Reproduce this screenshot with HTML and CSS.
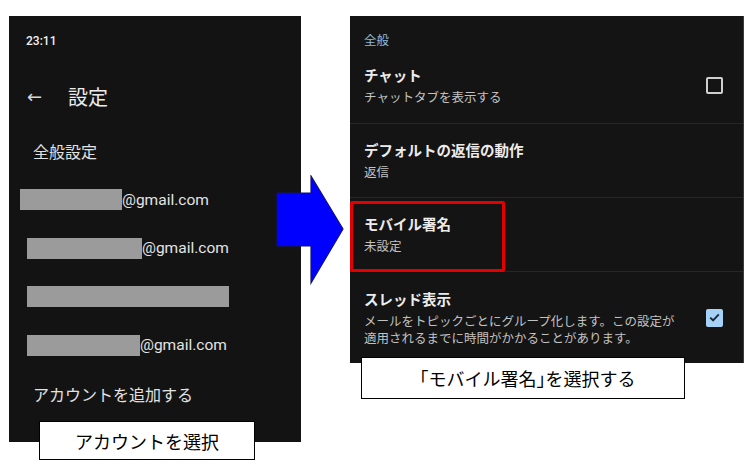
FILE: index.html
```html
<!DOCTYPE html>
<html lang="ja">
<head>
    <meta charset="UTF-8">
    <title>モバイル署名の設定</title>
    <link rel="stylesheet" href="styles.css">
</head>
<body>
    <div class="page">
        <div class="shot">
            <div class="phone">
                <div class="status">23:11</div>
                <div class="appbar">
                    <span class="back">&#8592;</span>
                    <span class="appbar-title">設定</span>
                </div>
                <div class="menu">
                    <div class="menu-item">全般設定</div>
                    <div class="menu-item account first">
                        <span class="mask" style="width:102px"></span>@gmail.com
                    </div>
                    <div class="menu-item account">
                        <span class="mask" style="width:115px"></span>@gmail.com
                    </div>
                    <div class="menu-item account">
                        <span class="mask" style="width:202px"></span>
                    </div>
                    <div class="menu-item account">
                        <span class="mask" style="width:113px"></span>@gmail.com
                    </div>
                    <div class="menu-item">アカウントを追加する</div>
                </div>
            </div>
            <div class="caption caption-left">アカウントを選択</div>
        </div>

        <svg class="arrow" width="70" height="112" viewBox="0 0 70 112">
            <polygon points="1,18 35,18 35,1 67,54 35,108 35,71 1,71" fill="#0000ff" stroke="#12127a" stroke-width="1.2"/>
        </svg>

        <div class="shot">
            <div class="settings">
                <div class="section-label">全般</div>
                <div class="row row-chat">
                    <div class="row-text">
                        <div class="row-title">チャット</div>
                        <div class="row-sub">チャットタブを表示する</div>
                    </div>
                    <span class="check"></span>
                </div>
                <div class="row row-reply">
                    <div class="row-text">
                        <div class="row-title">デフォルトの返信の動作</div>
                        <div class="row-sub">返信</div>
                    </div>
                </div>
                <div class="row row-sign">
                    <div class="row-text">
                        <div class="row-title">モバイル署名</div>
                        <div class="row-sub">未設定</div>
                    </div>
                    <div class="highlight"></div>
                </div>
                <div class="row row-thread">
                    <div class="row-text">
                        <div class="row-title">スレッド表示</div>
                        <div class="row-sub">メールをトピックごとにグループ化します。この設定が<br>適用されるまでに時間がかかることがあります。</div>
                    </div>
                    <span class="check checked">
                        <svg width="11" height="9" viewBox="0 0 11 9"><path d="M1.2 4.6 L4.1 7.3 L9.8 1.4" fill="none" stroke="#1b2a3a" stroke-width="1.9"/></svg>
                    </span>
                </div>
            </div>
            <div class="caption caption-right">「モバイル署名<span class="tight">」</span>を選択する</div>
        </div>
    </div>
</body>
</html>
```

FILE: styles.css
```css
* {
    margin: 0;
    padding: 0;
    box-sizing: border-box;
}
html, body {
    min-height: 473px;
}
body {
    background-color: #fff;
    font-family: "Noto Sans CJK JP", "Noto Sans", sans-serif;
}
.page {
    position: relative;
    display: flex;
    align-items: flex-start;
    gap: 49px;
    padding: 16px 0 0 9px;
    min-height: 473px;
}
.shot {
    position: relative;
}

/* left screenshot */
.phone {
    width: 292px;
    height: 426px;
    background-color: #131313;
    color: #e6e6e6;
}
.status {
    height: 56px;
    padding: 16px 0 0 17px;
    font-family: Roboto, sans-serif;
    font-size: 12px;
    font-weight: 500;
    line-height: 18px;
    color: #f0f0f0;
}
.appbar {
    display: flex;
    align-items: center;
    height: 48px;
    padding-left: 18px;
}
.back {
    width: 41px;
    font-family: "DejaVu Sans", sans-serif;
    font-size: 18px;
    color: #d8d8d8;
}
.appbar-title {
    font-size: 20px;
    color: #ececec;
}
.menu {
    padding-top: 7px;
}
.menu-item {
    display: flex;
    align-items: center;
    height: 48.5px;
    padding-left: 24px;
    font-size: 16px;
    color: #e2e2e2;
}
.account {
    padding-left: 18px;
    font-family: Roboto, sans-serif;
    font-size: 15.5px;
    color: #e4e4e4;
}
.account.first {
    padding-left: 11px;
}
.mask {
    display: inline-block;
    height: 21px;
    background-color: #9b9b9b;
}

/* right screenshot */
.settings {
    width: 394px;
    height: 347px;
    background-color: #141414;
    border-right: 1px solid #3c3c3c;
    color: #e8e8e8;
}
.section-label {
    height: 32px;
    padding: 16px 0 0 14px;
    font-size: 12.5px;
    line-height: 16px;
    color: #8cb9e0;
}
.row {
    position: relative;
    display: flex;
    align-items: center;
    justify-content: space-between;
    padding: 0 20px 0 14px;
    border-bottom: 1px solid #272727;
}
.row-chat {
    height: 76px;
}
.row-reply,
.row-sign {
    height: 74px;
}
.row-thread {
    height: 91px;
    border-bottom: none;
}
.row-title {
    font-size: 14.5px;
    font-weight: 700;
    line-height: 20px;
    color: #ececec;
}
.row-sub {
    margin-top: 3px;
    font-size: 12.5px;
    line-height: 17.5px;
    color: #c2c2c2;
}
.check {
    display: flex;
    align-items: center;
    justify-content: center;
    width: 17px;
    height: 17px;
    border: 2px solid #cfcfcf;
    border-radius: 2px;
}
.check.checked {
    height: 18px;
    border: none;
    background-color: #a6d2f8;
}
.highlight {
    position: absolute;
    left: 0;
    top: 3px;
    width: 155px;
    height: 71px;
    border: 3px solid #e40000;
    border-radius: 2px;
}

/* callouts */
.arrow {
    position: absolute;
    left: 276px;
    top: 175px;
}
.caption {
    position: absolute;
    display: flex;
    align-items: center;
    justify-content: center;
    background-color: #fff;
    border: 1px solid #000;
    font-size: 18px;
    color: #000;
}
.caption-left {
    left: 30px;
    top: 405px;
    width: 216px;
    height: 39px;
}
.caption-right {
    left: 11px;
    top: 341px;
    width: 324px;
    height: 42px;
}
.tight {
    font-feature-settings: "halt";
}
```
